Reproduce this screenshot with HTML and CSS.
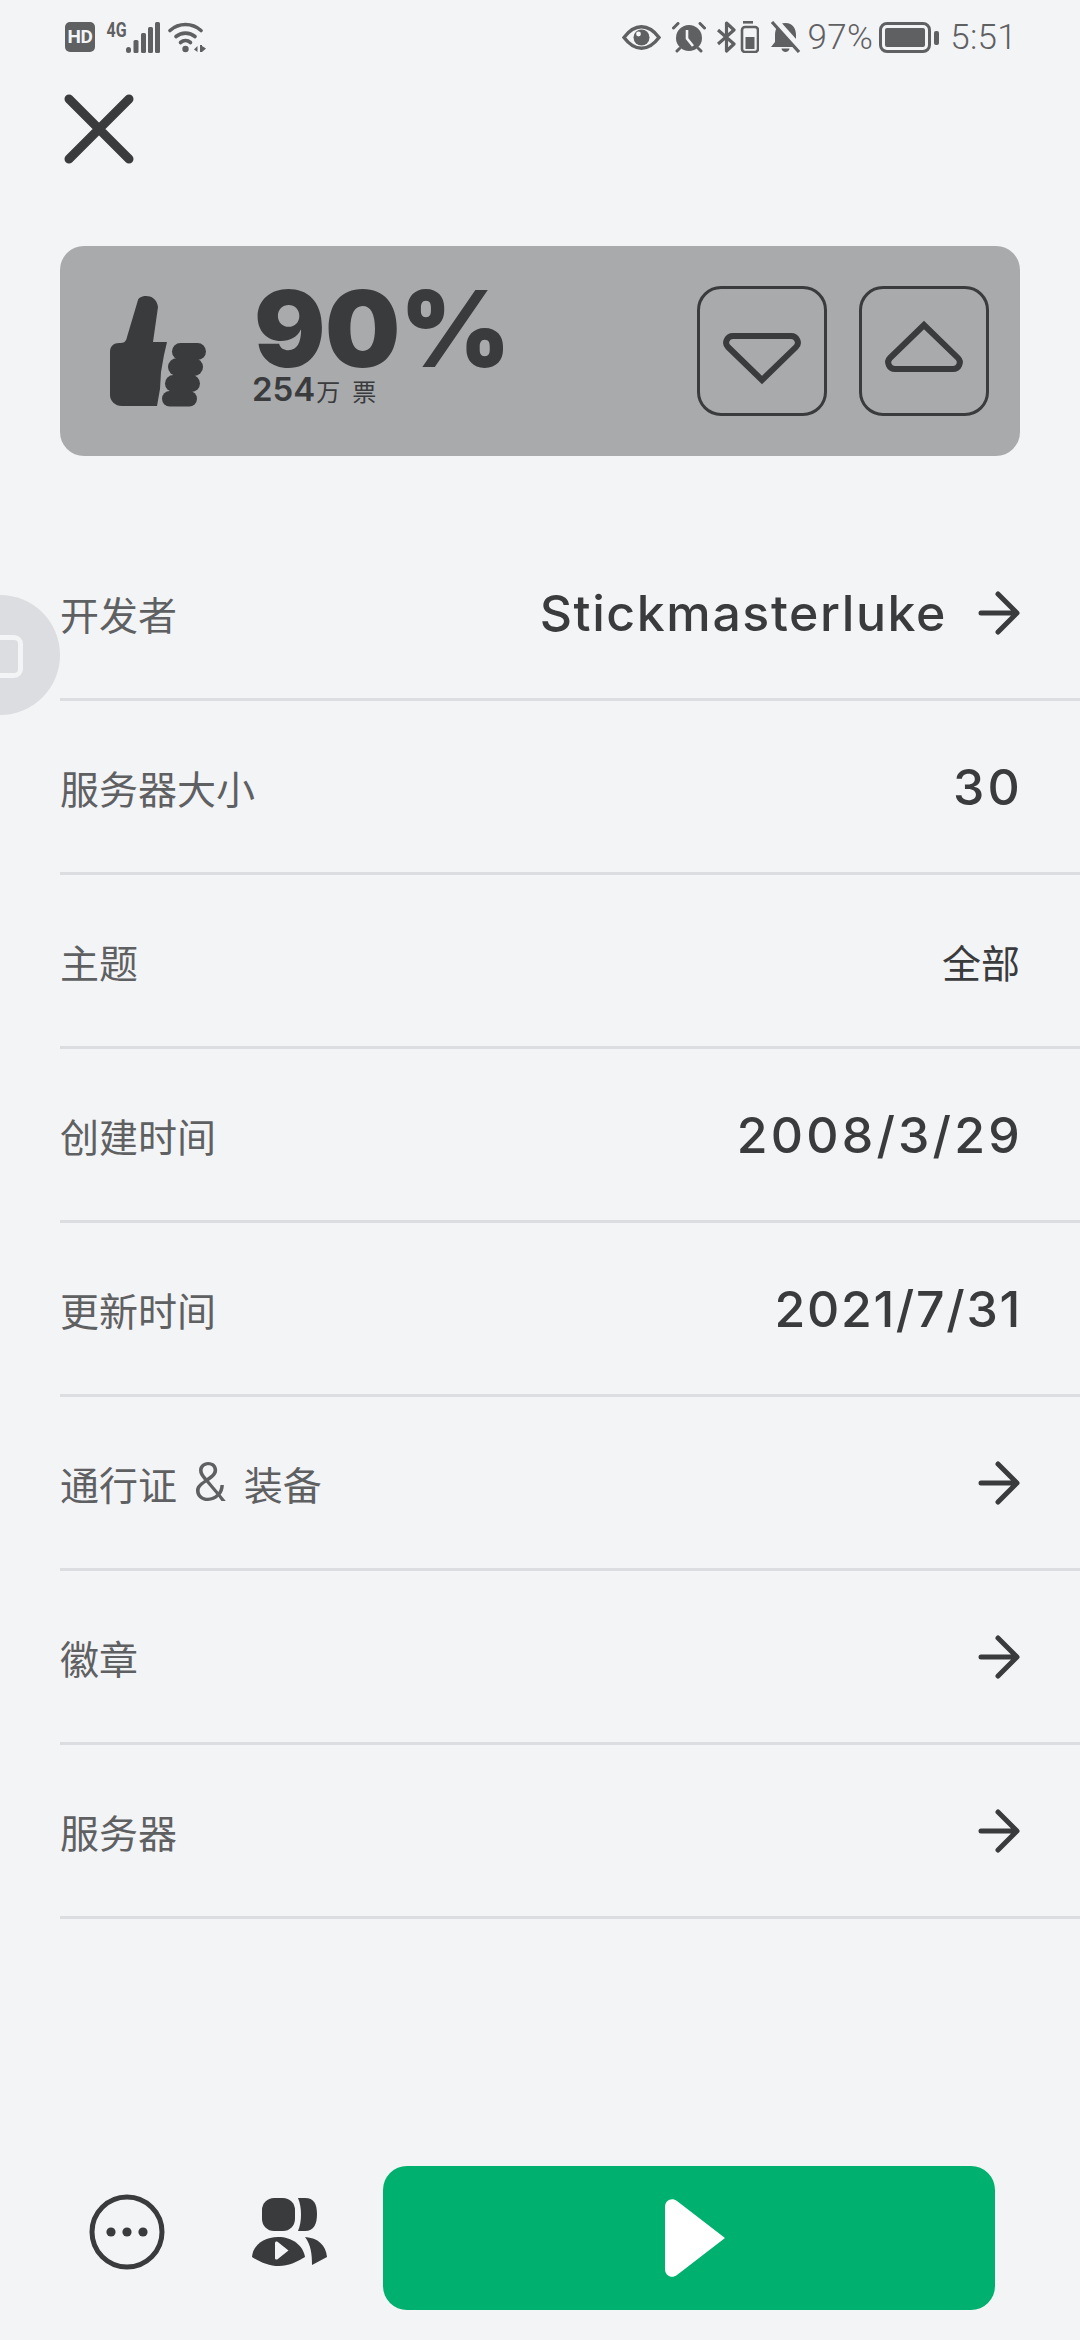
FILE: index.html
```html
<!DOCTYPE html>
<html><head><title>详情</title><meta charset="utf-8">
<link rel="stylesheet" href="styles.css">
</head>
<body>
    <div class="estado">
        <div class="estadoGrupo">
            <span class="hd">HD</span>
            <div class="red">
                <span class="cuatroG">4G</span>
                <svg width="34" height="31" viewBox="0 0 34 31" fill="#5f6062"><rect x="0" y="25" width="5" height="6" rx="2.5"/><rect x="7.5" y="18" width="5" height="13" rx="1.5"/><rect x="15" y="11" width="5" height="20" rx="1.5"/><rect x="22" y="5" width="5" height="26" rx="1.5"/><rect x="29" y="0" width="5" height="31" rx="1.5"/></svg>
            </div>
            <svg class="wifi" width="38" height="31" viewBox="0 0 38 31"><g fill="none" stroke="#5f6062" stroke-width="3.6" stroke-linecap="round"><path d="M2 8.5C11 .5 24 .5 33 8.5"/><path d="M8 14.5C13.500 10 21.500 10 27 14.500"/><path d="M12.500 20.500C15.500 18 19.500 18 22.500 20.500"/></g><g fill="#5f6062"><circle cx="17.500" cy="27" r="3.200"/><path d="M29.500 24V30L26 27.500Z"/><path d="M34 23V30H32V23Z"/><path d="M34 24L38 26.500L34 30Z"/></g></svg>
        </div>
        <div class="estadoGrupo">
            <svg width="39" height="25" viewBox="0 0 39 25"><path d="M2 12.500C8 4.500 14 1.800 19.500 1.800S31 4.500 37 12.500C31 20.500 25 23.200 19.500 23.200S8 20.500 2 12.500Z" fill="none" stroke="#5f6062" stroke-width="3.400"/><circle cx="19.500" cy="12.500" r="8" fill="#5f6062"/><circle cx="16.500" cy="9" r="2.400" fill="#f3f4f6"/></svg>
            <svg width="34" height="31" viewBox="0 0 34 31"><circle cx="17" cy="16" r="13" fill="#5f6062"/><path d="M15 8V16.500L21 24" fill="none" stroke="#f3f4f6" stroke-width="2.600"/><path d="M1.500 6L6 1.500M32.500 6L28 1.500M5 29L7.500 26.500M29 29L26.500 26.500" stroke="#5f6062" stroke-width="3" stroke-linecap="round"/></svg>
            <svg width="42" height="32" viewBox="0 0 42 32"><path d="M1 9L17 23L9.500 30V2L17 9L1 23" fill="none" stroke="#5f6062" stroke-width="3.200" stroke-linejoin="round"/><rect x="26" y="0" width="10" height="2.600" fill="#5f6062"/><rect x="25" y="6" width="16" height="25" rx="3" fill="none" stroke="#5f6062" stroke-width="2.600"/><rect x="28.500" y="16" width="9" height="12" fill="#5f6062"/></svg>
            <svg class="campana" width="31" height="32" viewBox="0 0 31 32"><path d="M15.500 2C23 2 26 8 26 14V21L30 26H1L5 21V14C5 8 8 2 15.500 2Z" fill="#5f6062"/><path d="M11.500 27.500H19.500C19 32 12 32 11.500 27.500Z" fill="#5f6062"/><path d="M5 -1L30 27" stroke="#f3f4f6" stroke-width="6"/><path d="M2 1L29 31" stroke="#5f6062" stroke-width="3.200"/></svg>
            <span class="estadoTexto porc">97%</span>
            <svg width="60" height="31" viewBox="0 0 60 31" fill="#5f6062"><rect x="1.500" y="1.500" width="49" height="28" rx="6.500" fill="none" stroke="#5f6062" stroke-width="3"/><rect x="6" y="6" width="40" height="19" rx="2"/><rect x="55" y="9" width="5" height="14" rx="2"/></svg>
            <span class="estadoTexto">5:51</span>
        </div>
    </div>

    <svg class="cerrar" width="70" height="70" viewBox="0 0 70 70"><path d="M5 5L65 65M65 5L5 65" stroke="#3a3b3d" stroke-width="9" stroke-linecap="round"/></svg>

    <div class="tarjeta">
        <svg class="pulgar" width="96" height="112" viewBox="0 0 96 112" fill="#3a3b3d">
            <path d="M28 5C29 0 46 -3 48 12L43 47H57L54 60L51 77L50 94L47 111H12C5 111 0 106 0 100V57C0 51 4 48 9 48C14 48 16 47 17 42Z"/>
            <rect x="62" y="48" width="34" height="17" rx="8.500"/>
            <rect x="58" y="63" width="35" height="18" rx="9"/>
            <rect x="55" y="80" width="35" height="17" rx="8.500"/>
            <rect x="52" y="96" width="35" height="15.500" rx="7.700"/>
        </svg>
        <div class="votos">
            <div class="porcentaje">90%</div>
            <div class="cuenta"><b>254</b>万<span class="votoPalabra">票</span></div>
        </div>
        <div class="botones">
            <div class="boton"><svg width="130" height="130" viewBox="0 0 130 130"><path d="M36 50H94C100 50 103 57 99 61L65 94L31 61C27 57 30 50 36 50Z" fill="none" stroke="#3a3b3d" stroke-width="6"/></svg></div>
            <div class="boton"><svg width="130" height="130" viewBox="0 0 130 130"><path d="M36 83H94C100 83 103 76 99 72L65 39L31 72C27 76 30 83 36 83Z" fill="none" stroke="#3a3b3d" stroke-width="6"/></svg></div>
        </div>
    </div>

    <div class="lista">
        <div class="fila"><span class="etiqueta">开发者</span><span class="valor">Stickmasterluke<svg class="flecha" width="44" height="44" viewBox="0 0 44 44"><path d="M4 22H39M21 3L40 22L21 41" fill="none" stroke="#3a3b3d" stroke-width="5" stroke-linecap="round" stroke-linejoin="round"/></svg></span></div>
        <div class="fila"><span class="etiqueta">服务器大小</span><span class="valor numero">30</span></div>
        <div class="fila"><span class="etiqueta">主题</span><span class="valorCjk">全部</span></div>
        <div class="fila"><span class="etiqueta">创建时间</span><span class="valor numero">2008/3/29</span></div>
        <div class="fila"><span class="etiqueta">更新时间</span><span class="valor numeroEstrecho">2021/7/31</span></div>
        <div class="fila"><span class="etiqueta">通行证<span class="amp">&amp;</span>装备</span><svg class="flecha" width="44" height="44" viewBox="0 0 44 44"><path d="M4 22H39M21 3L40 22L21 41" fill="none" stroke="#3a3b3d" stroke-width="5" stroke-linecap="round" stroke-linejoin="round"/></svg></div>
        <div class="fila"><span class="etiqueta">徽章</span><svg class="flecha" width="44" height="44" viewBox="0 0 44 44"><path d="M4 22H39M21 3L40 22L21 41" fill="none" stroke="#3a3b3d" stroke-width="5" stroke-linecap="round" stroke-linejoin="round"/></svg></div>
        <div class="fila"><span class="etiqueta">服务器</span><svg class="flecha" width="44" height="44" viewBox="0 0 44 44"><path d="M4 22H39M21 3L40 22L21 41" fill="none" stroke="#3a3b3d" stroke-width="5" stroke-linecap="round" stroke-linejoin="round"/></svg></div>
    </div>

    <div class="barra">
        <svg class="mas" width="76" height="76" viewBox="0 0 76 76"><circle cx="38" cy="38" r="35" fill="none" stroke="#3a3b3d" stroke-width="5"/><circle cx="22" cy="38" r="4.600" fill="#3a3b3d"/><circle cx="38" cy="38" r="4.600" fill="#3a3b3d"/><circle cx="54" cy="38" r="4.600" fill="#3a3b3d"/></svg>
        <svg class="gente" width="75" height="68" viewBox="0 0 75 68" fill="#3a3b3d">
            <rect x="10" y="0" width="33" height="33" rx="12"/>
            <path d="M46 0H53C62 0 65 6 65 16S62 33 53 33H46C50 24 50 9 46 0Z"/>
            <path d="M0 59C1 47 12 39 26 39C40 39 51 47 53 59C45 64 36 68 27 68C17 68 8 64 0 59Z"/>
            <path d="M53 39C66 40 74 47 75 59L60 67C60 56 59 47 53 39Z"/>
            <path d="M23 45C23 43.500 24.500 43 25.500 43.800L36.500 52.500L25.500 61.200C24.500 62 23 61.500 23 60Z" fill="#f3f4f6"/>
        </svg>
        <div class="jugar"><svg width="60" height="78" viewBox="0 0 60 78"><path d="M0 8C0 1 7 -2 12 2L60 39L12 76C7 80 0 77 0 70Z" fill="#fff"/></svg></div>
    </div>

    <div class="bola"><div class="bolaIcono"></div></div>
</body>
</html>
```

FILE: styles.css
```css
html, body {margin:0; padding:0;}
body {width:1080px; height:2340px; background-color:#f3f4f6; overflow:hidden; position:relative; font-family:"Inter","Noto Sans CJK SC",sans-serif; color:#3a3b3d;}

.estado {height:74px; box-sizing:border-box; padding:0 63px 0 65px; display:flex; justify-content:space-between; align-items:center;}
.estadoGrupo {display:flex; align-items:center; gap:11px;}
.estadoTexto {font-family:"Roboto",sans-serif; font-weight:300; font-size:35px; color:#5f6062; line-height:31px; letter-spacing:.3px;}
.porc {margin-left:-3px; margin-right:-5px;}
.campana {margin-right:-1px;}
.wifi {margin-left:-3px;}
.hd {width:30px; height:30px; background-color:#5f6062; color:#f3f4f6; border-radius:5px; font-family:"Roboto",sans-serif; font-weight:700; font-size:19px; line-height:30px; text-align:center; letter-spacing:-0.5px;}
.red {display:flex; align-items:flex-start; height:31px;}
.cuatroG {font-family:"Roboto",sans-serif; font-weight:700; font-size:20px; line-height:17px; color:#5f6062; transform:scaleX(.8); margin-right:-3px; margin-left:-2px;}

.cerrar {display:block; margin:20px 0 0 64px;}

.tarjeta {margin:82px 60px 0; height:210px; background-color:#a9aaac; border-radius:24px; display:flex; align-items:center; padding:0 31px 0 50px; box-sizing:border-box;}
.pulgar {flex:none;}
.votos {margin-left:48px; flex:1;}
.porcentaje {font-weight:900; font-size:106px; line-height:86px; margin-top:-6px; letter-spacing:-.5px;}
.cuenta {font-size:24px; line-height:34px; margin-left:-2px; color:#3a3b3d;}
.cuenta b {font-size:33px; font-weight:600; margin-right:1px;}
.votoPalabra {margin-left:12px;}
.botones {display:flex; gap:32px;}
.boton {width:130px; height:130px; box-sizing:border-box; border:3px solid #3a3b3d; border-radius:24px; position:relative; display:flex; align-items:center; justify-content:center;}
.boton svg {flex:none;}

.lista {margin-top:71px; margin-left:60px;}
.fila {height:174px; box-sizing:border-box; border-bottom:3px solid #dcdde0; padding-right:60px; display:flex; justify-content:space-between; align-items:center;}
.etiqueta {font-size:39px; color:#5f6062; font-family:"Noto Sans CJK SC",sans-serif; display:flex; align-items:center;}
.amp {font-family:"Inter",sans-serif; font-weight:300; font-size:54px; line-height:39px; margin:-3px 17px 0 16px;}
.valor {font-size:50px; font-weight:500; display:flex; align-items:center; letter-spacing:1.6px;}
.numero {letter-spacing:3.2px; margin-right:-3px;}
.numeroEstrecho {letter-spacing:1.7px; margin-right:-2px;}
.valorCjk {font-size:39px; font-family:"Noto Sans CJK SC",sans-serif; color:#3a3b3d;}
.flecha {flex:none; margin-right:-1px;}
.valor .flecha {margin-left:30px;}

.barra {margin-top:247px; display:flex; align-items:center; padding-left:89px;}
.mas {flex:none; margin-bottom:12px;}
.gente {flex:none; margin-left:87px; margin-bottom:12px;}
.jugar {width:612px; height:144px; box-sizing:border-box; padding-left:12px; margin-left:56px; background-color:#00b06f; border-radius:24px; display:flex; align-items:center; justify-content:center;}

.bola {position:absolute; left:-60px; top:595px; width:120px; height:120px; border-radius:50%; background-color:#dcdde0;}
.bolaIcono {position:absolute; left:40px; top:40px; width:43px; height:43px; box-sizing:border-box; border:5px solid #f3f4f6; border-radius:9px;}
```
